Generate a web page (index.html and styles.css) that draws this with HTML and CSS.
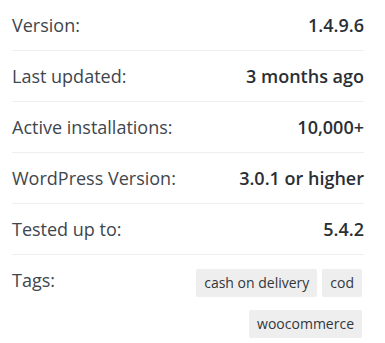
FILE: index.html
```html
<!DOCTYPE html>
<html>
<head>
<meta charset="utf-8">
<link rel="stylesheet" href="styles.css">
</head>
<body>
<ul class="meta">
  <li class="row"><span class="label">Version:</span><strong class="value">1.4.9.6</strong></li>
  <li class="row"><span class="label">Last updated:</span><strong class="value">3 months ago</strong></li>
  <li class="row"><span class="label">Active installations:</span><strong class="value">10,000+</strong></li>
  <li class="row"><span class="label">WordPress Version:</span><strong class="value">3.0.1 or higher</strong></li>
  <li class="row"><span class="label">Tested up to:</span><strong class="value">5.4.2</strong></li>
  <li class="row row-tags"><span class="label">Tags:</span>
    <div class="tags">
      <a class="tag">cash on delivery</a>
      <a class="tag">cod</a>
      <a class="tag">woocommerce</a>
    </div>
  </li>
</ul>
</body>
</html>
```

FILE: styles.css
```css
html, body {
  margin: 0;
  padding: 0;
  background: #ffffff;
}

body {
  font-family: "Open Sans", "Liberation Sans", sans-serif;
  color: #32373c;
}

.meta {
  list-style: none;
  margin: 0 0 0 12px;
  padding: 0;
  width: 352px;
}

.row {
  display: flex;
  justify-content: space-between;
  align-items: flex-start;
  padding: 12px 0;
  font-size: 18px;
  line-height: 26px;
  border-bottom: 1px solid #eeeeee;
}

.row-tags {
  border-bottom: none;
}

.label {
  font-weight: 400;
  color: #40464d;
}

.value {
  font-weight: 600;
  color: #2a2f35;
}

.tags {
  display: flex;
  flex-wrap: wrap;
  justify-content: flex-end;
  column-gap: 5px;
  row-gap: 13px;
  width: 175px;
  margin-top: 2px;
  margin-right: 2px;
}

.tag {
  display: block;
  background: #eeeeee;
  border-radius: 2px;
  font-size: 14px;
  line-height: 20px;
  padding: 4px 8px;
  color: #32373c;
}
```
